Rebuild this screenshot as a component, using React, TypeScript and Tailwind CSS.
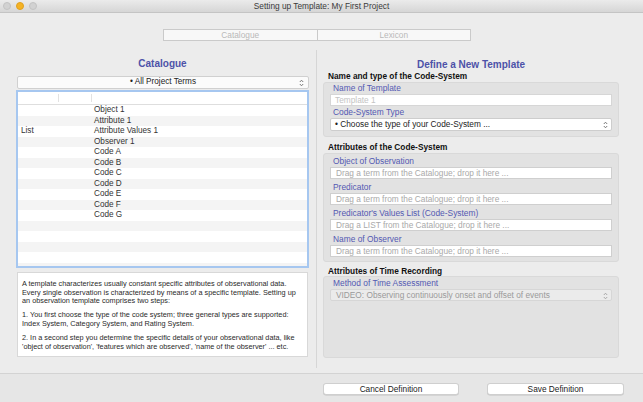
import React from "react";

const Stepper: React.FC<{ color?: string }> = ({ color = "#6b6b6b" }) => (
  <svg width="5" height="8" viewBox="0 0 5 8" fill="none">
    <path d="M0.8 3 L2.5 1.2 L4.2 3" stroke={color} strokeWidth="0.9" />
    <path d="M0.8 5 L2.5 6.8 L4.2 5" stroke={color} strokeWidth="0.9" />
  </svg>
);

const rows: { kind: string; name: string }[] = [
  { kind: "", name: "Object 1" },
  { kind: "", name: "Attribute 1" },
  { kind: "List", name: "Attribute Values 1" },
  { kind: "", name: "Observer 1" },
  { kind: "", name: "Code A" },
  { kind: "", name: "Code B" },
  { kind: "", name: "Code C" },
  { kind: "", name: "Code D" },
  { kind: "", name: "Code E" },
  { kind: "", name: "Code F" },
  { kind: "", name: "Code G" },
  { kind: "", name: "" },
  { kind: "", name: "" },
  { kind: "", name: "" },
  { kind: "", name: "" },
  { kind: "", name: "" },
];

const Label: React.FC<{ children: React.ReactNode; h?: string }> = ({ children, h = "h-[14px]" }) => (
  <div className={`${h} flex items-end pb-[1px] pl-[3px] text-[8.4px] leading-[9px] text-[#5359b2]`}>{children}</div>
);

const DropField: React.FC<{ text: string }> = ({ text }) => (
  <div className="h-[12px] bg-white border border-[#cfcfcf] flex items-center pl-[5px] text-[8.3px] text-[#a9a9a9] whitespace-nowrap">
    {text}
  </div>
);

const SectionTitle: React.FC<{ children: React.ReactNode; cls: string }> = ({ children, cls }) => (
  <div className={`${cls} pl-[5px] text-[8.3px] leading-[9px] font-bold text-[#111]`}>{children}</div>
);

export default function App() {
  return (
    <div
      className="w-[643px] h-[402px] bg-[#ececec] flex flex-col overflow-hidden text-[#333]"
      style={{ fontFamily: '"Liberation Sans", Arial, sans-serif' }}
    >
      {/* title bar */}
      <div className="relative h-[13px] shrink-0 bg-gradient-to-b from-[#ebebeb] to-[#d6d6d6] border-b border-[#c4c4c4] flex items-center justify-center">
        <div className="absolute left-[3px] top-[2px] flex gap-[5px]">
          <span className="w-[8px] h-[8px] rounded-full bg-[#d2d2d2] border border-[#c3c3c3]" />
          <span className="w-[8px] h-[8px] rounded-full bg-[#f5b324] border border-[#e0a020]" />
          <span className="w-[8px] h-[8px] rounded-full bg-[#d2d2d2] border border-[#c3c3c3]" />
        </div>
        <span className="text-[8.3px] leading-[10px] text-[#3a3a3a]">Setting up Template: My First Project</span>
      </div>

      {/* segmented control */}
      <div className="h-[37px] shrink-0 flex items-start pt-[16px] pl-[163px]">
        <div className="flex w-[308px] h-[12px] border border-[#cacaca] bg-[#f8f8f8] text-[8.3px] text-[#b8b8b8]">
          <div className="flex-1 flex items-center justify-center border-r border-[#cacaca]">Catalogue</div>
          <div className="flex-1 flex items-center justify-center">Lexicon</div>
        </div>
      </div>

      {/* main */}
      <div className="flex h-[318px] shrink-0">
        {/* left column */}
        <div className="ml-[16px] w-[293px] flex flex-col">
          <div className="h-[26px] pt-[9px] text-center text-[10px] leading-[10px] font-bold text-[#4c52a8]">Catalogue</div>
          <div className="ml-[1px] h-[13px] bg-[#fbfbfb] border border-[#d0d0d0] rounded-[2px] flex items-center relative text-[8.2px] text-[#222]">
            <span className="flex-1 text-center">• All Project Terms</span>
            <span className="absolute right-[4px] top-[2px]">
              <Stepper />
            </span>
          </div>
          <div className="mt-[1px] h-[178px] border-[2px] border-[#a6c7f0] bg-white overflow-hidden flex flex-col">
            <div className="h-[13px] shrink-0 flex border-b border-[#dedede]">
              <div className="w-[41px] border-r border-[#e2e2e2] my-[2px]" />
              <div className="w-[33px] border-r border-[#e2e2e2] my-[2px]" />
              <div className="flex-1" />
            </div>
            {rows.map((r, i) => (
              <div
                key={i}
                className={`h-[10.5px] shrink-0 flex items-center text-[8.2px] leading-[10px] ${
                  i % 2 === 0 ? "bg-white" : "bg-[#f4f4f4]"
                }`}
              >
                <div className="w-[76px] pl-[3px]">{r.kind}</div>
                <div>{r.name}</div>
              </div>
            ))}
          </div>
          <div className="mt-[4px] ml-[1px] w-[291px] h-[85px] bg-white border border-[#d8d8d8] pt-[7px] pl-[4px] text-[7.3px] leading-[8.5px] text-[#2a2a2a] whitespace-nowrap overflow-hidden">
            <p>
              A template characterizes usually constant specific attributes of observational data.
              <br />
              Every single observation is characterized by means of a specific template. Setting up
              <br />
              an observation template comprises two steps:
            </p>
            <p className="mt-[5.5px]">
              1. You first choose the type of the code system; three general types are supported:
              <br />
              Index System, Category System, and Rating System.
            </p>
            <p className="mt-[6px]">
              2. In a second step you determine the specific details of your observational data, like
              <br />
              'object of observation', 'features which are observed', 'name of the observer' ... etc.
            </p>
          </div>
        </div>

        {/* separator */}
        <div className="ml-[7px] w-px h-[318px] bg-[#d6d6d6]" />

        {/* right column */}
        <div className="ml-[6px] w-[296px] flex flex-col">
          <div className="h-[20px] pt-[10px] text-center text-[10px] leading-[10px] font-bold text-[#4c52a8]">
            Define a New Template
          </div>
          <SectionTitle cls="h-[12px] pt-[1.5px]">Name and type of the Code-System</SectionTitle>
          <div className="h-[55px] bg-[#e2e2e2] border border-[#d9d9d9] rounded-[3px] px-[6px]">
            <Label h="h-[11px]">Name of Template</Label>
            <div className="h-[12px] bg-white border border-[#d6d6d6] flex items-center pl-[4px] text-[8.3px] text-[#c4c4c4]">
              Template 1
            </div>
            <Label h="h-[12px]">Code-System Type</Label>
            <div className="relative h-[13px] bg-white border border-[#cdcdcd] rounded-[2px] flex items-center pl-[4px] text-[8.3px] text-[#222]">
              • Choose the type of your Code-System ...
              <span className="absolute right-[3px] top-[2px]">
                <Stepper />
              </span>
            </div>
          </div>

          <SectionTitle cls="h-[16px] pt-[6px]">Attributes of the Code-System</SectionTitle>
          <div className="h-[109px] bg-[#e2e2e2] border border-[#d9d9d9] rounded-[3px] px-[6px]">
            <Label h="h-[13px]">Object of Observation</Label>
            <DropField text="Drag a term from the Catalogue; drop it here ..." />
            <Label>Predicator</Label>
            <DropField text="Drag a term from the Catalogue; drop it here ..." />
            <Label>Predicator's Values List (Code-System)</Label>
            <DropField text="Drag a LIST from the Catalogue; drop it here ..." />
            <Label>Name of Observer</Label>
            <DropField text="Drag a term from the Catalogue; drop it here ..." />
          </div>

          <SectionTitle cls="h-[14px] pt-[5px]">Attributes of Time Recording</SectionTitle>
          <div className="h-[82px] bg-[#e2e2e2] border border-[#d9d9d9] rounded-[3px] px-[6px]">
            <Label h="h-[12px]">Method of Time Assessment</Label>
            <div className="relative h-[12px] bg-[#ebebeb] border border-[#d6d6d6] rounded-[2px] flex items-center pl-[5px] text-[8.3px] text-[#9a9a9a]">
              VIDEO: Observing continuously onset and offset of events
              <span className="absolute right-[3px] top-[1.5px]">
                <Stepper color="#a0a0a0" />
              </span>
            </div>
          </div>
        </div>
      </div>

      {/* bottom bar */}
      <div className="flex-1 mt-[5px] border-t border-[#d3d3d3] bg-[#e6e6e6] flex items-start pt-[9px] pl-[323px] gap-[28px]">
        <button className="w-[136px] h-[12px] bg-white rounded-[3px] border border-[#cfcfcf] shadow-[0_0.5px_0.5px_rgba(0,0,0,0.15)] text-[8.3px] leading-[10px] text-[#222]">
          Cancel Definition
        </button>
        <button className="w-[137px] h-[12px] bg-white rounded-[3px] border border-[#cfcfcf] shadow-[0_0.5px_0.5px_rgba(0,0,0,0.15)] text-[8.3px] leading-[10px] text-[#222]">
          Save Definition
        </button>
      </div>
    </div>
  );
}
